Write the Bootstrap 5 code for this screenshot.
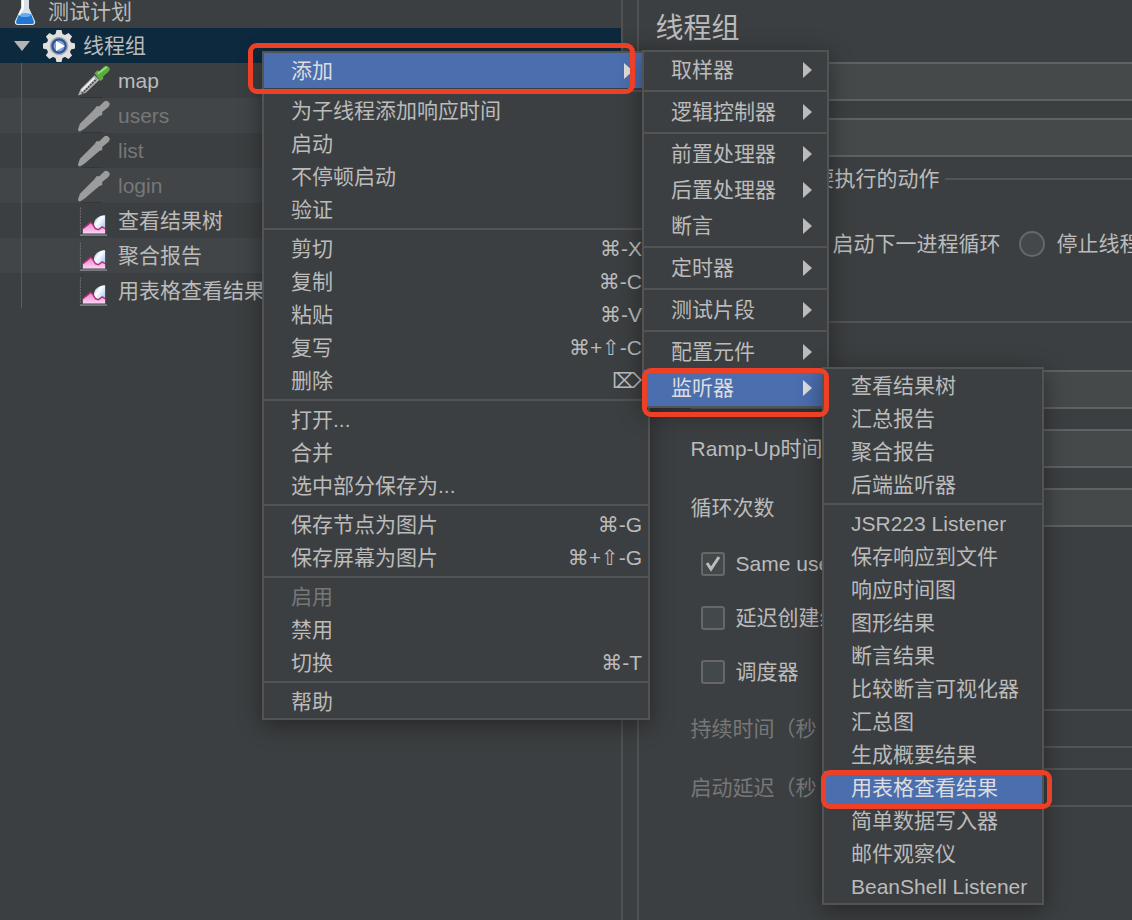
<!DOCTYPE html>
<html lang="zh-CN" data-bs-theme="dark">
<head>
<meta charset="utf-8">
<meta name="viewport" content="width=device-width, initial-scale=1">
<title>线程组</title>
<link rel="stylesheet" href="https://cdn.jsdelivr.net/npm/bootstrap@5.3.0/dist/css/bootstrap.min.css">
<style>
  :root { --ink:#bbbbbb; --dim:#777777; --line:#555555; --pick:#4b6eaf; --ring:#ee4027; }
  body { background:#3c3f41; color:var(--ink); font:21px/32px "Liberation Sans","Noto Sans CJK SC",sans-serif; }
  svg { display:block; flex:none; }

  /* test plan tree */
  .tree-pane { width:55%; border-right:2px solid #515151; }
  .tree-row { height:35px; color:var(--ink); white-space:nowrap; text-decoration:none; }
  .tree-root { height:28px; padding:0 0 4px 13px; gap:11px; }
  .tree-current { background:#0d293e; padding-left:14px; gap:8px; }
  .tree-current .arrow-down { margin-right:5px; }
  .tree-leaves { position:relative; }
  .tree-leaves::before { content:""; position:absolute; left:21px; top:0; bottom:0; width:1px; background:#5a5d5f; }
  .tree-leaves .tree-row { padding-left:77px; gap:8px; }
  .tree-leaves li:nth-child(even) { background:#414547; }
  .tree-leaves .tree-off, .tree-off { color:var(--dim); }

  /* thread group form */
  .form-pane { margin-left:14px; border-left:2px solid #515151; padding:9px 0 0 17px; }
  .pane-title { color:inherit; font-size:28px; line-height:40px; margin-bottom:13px; font-weight:400; }
  .name-rows { gap:17px; }
  .field-label { width:190px; flex:none; white-space:nowrap; }
  .form-pane .form-control { height:39px; min-height:0; padding:0 8px; border-radius:0; background:#45494a; border:2px solid #5f6162; border-right:0; color:var(--ink); font-size:21px; }
  .form-pane .form-control:disabled { background:transparent; border-color:#525456; }
  .group-head { color:inherit; gap:5px; margin-left:11px; font-size:21px; line-height:32px; white-space:nowrap; }
  .group-head::before, .group-head::after { content:""; height:2px; background:#515355; }
  .group-head::before { width:142px; }
  .group-head::after { flex:1; }
  .action-group { margin-top:6px; }
  .action-row { margin-top:33px; padding-left:139px; white-space:nowrap; gap:18px; }
  .action-row label { gap:12px; }
  .props-group { margin-top:61px; }
  .props-group::before { content:""; display:block; height:2px; margin-left:11px; background:#515355; }
  .props-rows { gap:20px; margin-top:47px; padding-left:35px; }
  .tick-row { height:34px; padding-left:10px; gap:11px; white-space:nowrap; }
  .form-pane .form-check-input { width:24px; height:24px; margin:0; flex:none; background-color:#43494a; border:2px solid #676767; }
  .form-pane .form-check-input[type=checkbox] { border-radius:3px; }
  .form-pane .form-check-input[type=radio] { width:26px; height:26px; }
  .form-pane .form-check-input[type=checkbox]:checked { background-color:#43494a; background-size:20px; background-image:url("data:image/svg+xml,%3Csvg xmlns='http://www.w3.org/2000/svg' viewBox='0 0 20 20'%3E%3Cpath d='M4 9l4 6L16 3' fill='none' stroke='%23bbbbbb' stroke-width='3'/%3E%3C/svg%3E"); }

  /* popup menus */
  .popup { position:absolute; margin:0; padding:0; list-style:none; background:#3c3f41; border:2px solid #515355; box-shadow:0 5px 22px rgba(0,0,0,.4); }
  .popup .popup { z-index:2; }
  .popup-main { left:262px; top:51px; width:388px; }
  .popup-add { left:378px; top:-3px; width:187px; }
  .popup-listen { left:178px; top:-3px; width:222px; }
  .popup li { position:relative; }
  .popup-btn { display:flex; justify-content:space-between; align-items:center; width:100%; height:33px; padding:0 6px 0 27px; border:0; background:none; color:var(--ink); white-space:nowrap; text-align:left; }
  .popup-btn.tall { height:36px; padding-right:15px; }
  .popup-main > li:first-child > .popup-btn { height:35px; }
  .popup-btn.tall::after { content:""; border-left:9px solid currentColor; border-top:8px solid transparent; border-bottom:8px solid transparent; }
  .popup-btn.picked { background:var(--pick); color:#dddddd; }
  .popup-btn:disabled { color:var(--dim); }
  .popup kbd { padding:0; background:none; color:inherit; font:21px "Liberation Sans","DejaVu Sans",sans-serif; }
  .popup .rule { height:2px; margin:2px 0; background:#515355; }
  .ring { position:absolute; z-index:5; border:5px solid var(--ring); border-radius:9px; pointer-events:none; }
  .ring-main { inset:-10px 13px -6px -16px; }
  .ring-add { inset:-2px -2px -11px -2px; }
  .ring-listen { inset:-1px -10px -5px -3px; }
</style>
</head>
<body class="overflow-hidden">

<svg width="0" height="0" class="position-absolute" aria-hidden="true">
  <defs>
    <linearGradient id="gBlue" x1="0" y1="0" x2="1" y2="1"><stop offset="0" stop-color="#7fb2ee"/><stop offset=".4" stop-color="#fff"/><stop offset="1" stop-color="#8dbbf0"/></linearGradient>
    <linearGradient id="gPink" x1="0" y1="0" x2="0" y2="1"><stop offset="0" stop-color="#f07fd0"/><stop offset="1" stop-color="#fbd5f4"/></linearGradient>
    <symbol id="dropper-off" viewBox="0 0 34 34">
      <path d="M1 31L3 25 18 10 20 7 23 7 28 2Q31 0 33 3 35 5 32 8L26 13 26 16 23 17 8 30 3 33Q1 33 1 31Z" fill="#9c9c9c"/>
      <path d="M5 34H26" stroke="#343739" stroke-width="1"/>
    </symbol>
    <symbol id="dropper-on" viewBox="0 0 34 34">
      <path d="M1 32L4 25 18 11 23 16 9 29Z" fill="#b4b4b4"/>
      <path d="M5 27L18 14" stroke="#f4f4f4" stroke-width="2"/>
      <path d="M5 30L20 15" stroke="#4d5052" stroke-width="2" stroke-dasharray="2 1"/>
      <path d="M18 9L21 6 23 7 28 2Q31 0 33 3 35 5 32 8L27 12 27 15 24 17Z" fill="#5dab43"/>
      <path d="M22 9L30 3" stroke="#9bdc7c" stroke-width="2" stroke-linecap="round"/>
      <path d="M4 34H26" stroke="#2f3133" stroke-width="1"/>
    </symbol>
    <symbol id="graph" viewBox="0 0 34 34">
      <path d="M3.500 3V30" stroke="#707274" stroke-width="1" stroke-dasharray="2 1"/>
      <path d="M3 31.500H31" stroke="#85878a" stroke-width="1.500"/>
      <path d="M29 11C20 11 16 18 18 23L22 27 29 24Z" fill="url(#gBlue)"/>
      <path d="M6 30V25L11 21 14 18.500 16 20 19 25 22 26 26 23 29 25V30Z" fill="url(#gPink)"/>
      <path d="M6 25L11 21 14 18.500 16 20 19 25 22 26 26 23 29 25" fill="none" stroke="#b3306f" stroke-width="1.500"/>
    </symbol>
  </defs>
</svg>

<div class="d-flex min-vh-100 overflow-hidden">
  <nav class="tree-pane flex-shrink-0" aria-label="测试计划">
    <a href="#" class="tree-row tree-root d-flex align-items-center">
      <svg width="24" height="28" viewBox="0 0 24 28" aria-hidden="true">
        <path d="M8 0H16V10L22 23Q23 26 20 27H4Q1 26 2 23L8 10Z" fill="#d9e2ea"/>
        <path d="M6 16H18L21 24Q21 26 19 26H5Q3 26 3 24Z" fill="#2377d4"/>
        <ellipse cx="12" cy="17" rx="6" ry="2" fill="#63acf0"/>
        <path d="M10 1V10L6 17" stroke="#fff" stroke-width="2" fill="none"/>
      </svg>
      <span>测试计划</span>
    </a>
    <a href="#" class="tree-row tree-current d-flex align-items-center">
      <svg class="arrow-down" width="16" height="10" viewBox="0 0 16 10" aria-hidden="true"><path d="M0 0H16L8 10Z" fill="#b4b4b4"/></svg>
      <svg width="32" height="32" viewBox="-16 -16 32 32" aria-hidden="true">
        <g fill="#e0e0de">
          <circle r="12.500"/>
          <g id="teeth"><path d="M-4-10L-2.500-16H2.500L4-10ZM-4 10L-2.500 16H2.500L4 10Z"/><path d="M-10-4L-16-2.500V2.500L-10 4ZM10-4L16-2.500V2.500L10 4Z"/></g>
          <use href="#teeth" transform="rotate(45)"/>
        </g>
        <circle r="8.500" fill="#2f528f" stroke="#a3adbd" stroke-width="1.500"/>
        <circle r="5.500" fill="#7fa3d8"/>
        <path d="M-3-5L6 0-3 5Z" fill="#fff"/>
      </svg>
      <span>线程组</span>
    </a>
    <ul class="tree-leaves list-unstyled m-0">
      <li><a href="#" class="tree-row d-flex align-items-center"><svg width="33" height="34"><use href="#dropper-on"/></svg>map</a></li>
      <li><a href="#" class="tree-row tree-off d-flex align-items-center"><svg width="33" height="34"><use href="#dropper-off"/></svg>users</a></li>
      <li><a href="#" class="tree-row tree-off d-flex align-items-center"><svg width="33" height="34"><use href="#dropper-off"/></svg>list</a></li>
      <li><a href="#" class="tree-row tree-off d-flex align-items-center"><svg width="33" height="34"><use href="#dropper-off"/></svg>login</a></li>
      <li><a href="#" class="tree-row d-flex align-items-center"><svg width="33" height="34"><use href="#graph"/></svg>查看结果树</a></li>
      <li><a href="#" class="tree-row d-flex align-items-center"><svg width="33" height="34"><use href="#graph"/></svg>聚合报告</a></li>
      <li><a href="#" class="tree-row d-flex align-items-center"><svg width="33" height="34"><use href="#graph"/></svg>用表格查看结果</a></li>
    </ul>
  </nav>

  <main class="form-pane flex-grow-1 overflow-hidden">
    <h1 class="pane-title">线程组</h1>
    <div class="name-rows d-flex flex-column">
      <input class="form-control" aria-label="名称">
      <input class="form-control" aria-label="注释">
    </div>

    <section class="action-group">
      <h2 class="group-head d-flex align-items-center mb-0 fw-normal">要执行的动作</h2>
      <div class="action-row d-flex">
        <label class="d-flex align-items-center"><input class="form-check-input" type="radio" name="onError">启动下一进程循环</label>
        <label class="d-flex align-items-center"><input class="form-check-input" type="radio" name="onError">停止线程</label>
      </div>
    </section>

    <section class="props-group" aria-label="线程属性">
      <div class="props-rows d-flex flex-column">
        <input class="form-control" aria-label="线程数">
        <div class="d-flex align-items-center"><label class="field-label" for="fRamp">Ramp-Up时间</label><input id="fRamp" class="form-control"></div>
        <div class="d-flex align-items-center"><label class="field-label" for="fLoops">循环次数</label><input id="fLoops" class="form-control"></div>
        <div class="tick-row d-flex align-items-center"><input id="cSame" class="form-check-input" type="checkbox" checked><label for="cSame">Same user</label></div>
        <div class="tick-row d-flex align-items-center"><input id="cDelay" class="form-check-input" type="checkbox"><label for="cDelay">延迟创建线</label></div>
        <div class="tick-row d-flex align-items-center"><input id="cSched" class="form-check-input" type="checkbox"><label for="cSched">调度器</label></div>
        <div class="d-flex align-items-center tree-off"><label class="field-label" for="fLast">持续时间（秒</label><input id="fLast" class="form-control" disabled></div>
        <div class="d-flex align-items-center tree-off"><label class="field-label" for="fWait">启动延迟（秒</label><input id="fWait" class="form-control" disabled></div>
      </div>
    </section>
  </main>
</div>

<ul class="popup popup-main">
  <li>
    <button class="popup-btn tall picked">添加</button>
    <span class="ring ring-main"></span>
    <ul class="popup popup-add">
      <li><button class="popup-btn tall">取样器</button></li>
      <li class="rule"></li>
      <li><button class="popup-btn tall">逻辑控制器</button></li>
      <li class="rule"></li>
      <li><button class="popup-btn tall">前置处理器</button></li>
      <li><button class="popup-btn tall">后置处理器</button></li>
      <li><button class="popup-btn tall">断言</button></li>
      <li class="rule"></li>
      <li><button class="popup-btn tall">定时器</button></li>
      <li class="rule"></li>
      <li><button class="popup-btn tall">测试片段</button></li>
      <li class="rule"></li>
      <li><button class="popup-btn tall">配置元件</button></li>
      <li>
        <button class="popup-btn tall picked">监听器</button>
        <span class="ring ring-add"></span>
        <ul class="popup popup-listen">
          <li><button class="popup-btn">查看结果树</button></li>
          <li><button class="popup-btn">汇总报告</button></li>
          <li><button class="popup-btn">聚合报告</button></li>
          <li><button class="popup-btn">后端监听器</button></li>
          <li class="rule"></li>
          <li><button class="popup-btn">JSR223 Listener</button></li>
          <li><button class="popup-btn">保存响应到文件</button></li>
          <li><button class="popup-btn">响应时间图</button></li>
          <li><button class="popup-btn">图形结果</button></li>
          <li><button class="popup-btn">断言结果</button></li>
          <li><button class="popup-btn">比较断言可视化器</button></li>
          <li><button class="popup-btn">汇总图</button></li>
          <li><button class="popup-btn">生成概要结果</button></li>
          <li><button class="popup-btn picked">用表格查看结果</button><span class="ring ring-listen"></span></li>
          <li><button class="popup-btn">简单数据写入器</button></li>
          <li><button class="popup-btn">邮件观察仪</button></li>
          <li><button class="popup-btn">BeanShell Listener</button></li>
        </ul>
      </li>
    </ul>
  </li>
  <li class="rule"></li>
  <li><button class="popup-btn">为子线程添加响应时间</button></li>
  <li><button class="popup-btn">启动</button></li>
  <li><button class="popup-btn">不停顿启动</button></li>
  <li><button class="popup-btn">验证</button></li>
  <li class="rule"></li>
  <li><button class="popup-btn">剪切<kbd>⌘-X</kbd></button></li>
  <li><button class="popup-btn">复制<kbd>⌘-C</kbd></button></li>
  <li><button class="popup-btn">粘贴<kbd>⌘-V</kbd></button></li>
  <li><button class="popup-btn">复写<kbd>⌘+⇧-C</kbd></button></li>
  <li><button class="popup-btn">删除<kbd>⌦</kbd></button></li>
  <li class="rule"></li>
  <li><button class="popup-btn">打开...</button></li>
  <li><button class="popup-btn">合并</button></li>
  <li><button class="popup-btn">选中部分保存为...</button></li>
  <li class="rule"></li>
  <li><button class="popup-btn">保存节点为图片<kbd>⌘-G</kbd></button></li>
  <li><button class="popup-btn">保存屏幕为图片<kbd>⌘+⇧-G</kbd></button></li>
  <li class="rule"></li>
  <li><button class="popup-btn" disabled>启用</button></li>
  <li><button class="popup-btn">禁用</button></li>
  <li><button class="popup-btn">切换<kbd>⌘-T</kbd></button></li>
  <li class="rule"></li>
  <li><button class="popup-btn">帮助</button></li>
</ul>

<script src="https://cdn.jsdelivr.net/npm/bootstrap@5.3.0/dist/js/bootstrap.bundle.min.js"></script>
</body>
</html>
